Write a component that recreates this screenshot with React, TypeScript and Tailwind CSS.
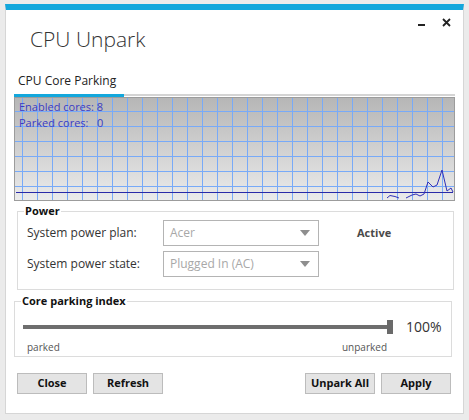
import { Fragment } from 'react'

const font = { fontFamily: '"Open Sans", "Noto Sans", "Liberation Sans", sans-serif' }

// chart grid, 15px cells
const vLines = Array.from({ length: 29 }, (_, i) => 7.5 + i * 15)
const hLines = [13.5, 28.5, 43.5, 58.5, 73.5, 88.5]

const Chart = () => (
  <div className="relative mx-[8px] h-[104px] w-[441px] border border-[#9c9c9c]">
    <svg width="439" height="102" className="block">
      <defs>
        <linearGradient id="bg" x1="0" y1="0" x2="0" y2="1">
          <stop offset="0" stopColor="#b6b6b6" />
          <stop offset="1" stopColor="#ebebeb" />
        </linearGradient>
      </defs>
      <rect width="439" height="102" fill="url(#bg)" />
      {vLines.map((x) => (
        <line key={'v' + x} x1={x} y1="0" x2={x} y2="102" stroke="#78aaf8" strokeWidth="1" />
      ))}
      {hLines.map((y) => (
        <line key={'h' + y} x1="0" y1={y} x2="439" y2={y} stroke="#78aaf8" strokeWidth="1" />
      ))}
      <line x1="1" y1="94.5" x2="438" y2="94.5" stroke="#2a2aa8" strokeWidth="1.2" />
      <polyline points="372,100 375,97.5 380,98.5 384,100" fill="none" stroke="#3030b8" strokeWidth="1" />
      <polyline
        points="391,100 397,97 401,96 405,98 409,96 413,84 418,89 422,87 427,72 432,93 436,90 438,94"
        fill="none"
        stroke="#3030b8"
        strokeWidth="1"
      />
    </svg>
    <div className="absolute left-[4px] top-[1px] text-[11px] leading-[16px] text-[#3b3bc4]" style={font}>
      <p>Enabled cores: 8</p>
      <p>Parked cores:&nbsp;&nbsp; 0</p>
    </div>
  </div>
)

const Select = ({ value }: { value: string }) => (
  <div className="flex h-[26px] w-[156px] items-center justify-between border border-[#b4b4b4] bg-white pl-[6px] pr-[8px]">
    <span className="text-[12px] text-[#a8a8a8]">{value}</span>
    <svg width="10" height="6" viewBox="0 0 10 6">
      <path d="M0 0h10L5 6z" fill="#8e8e8e" />
    </svg>
  </div>
)

const Button = ({ label }: { label: string }) => (
  <button className="h-[21px] w-[70px] border border-[#bcbcbc] bg-[#e4e4e4] text-[11px] font-bold text-[#111]">
    {label}
  </button>
)

export default function App() {
  return (
    <div className="h-[420px] w-[469px] bg-[#ebebeb] pl-[5px] pt-[4px]" style={font}>
      <div className="h-[410px] w-[459px] border border-t-[6px] border-[#d6d6d6] border-t-[#13a7dc] bg-white">
        {/* header */}
        <div className="flex items-start justify-between">
          <h1 className="pl-[24px] pt-[14px] text-[21px] font-light leading-[30px] text-[#333]">CPU Unpark</h1>
          <div className="flex items-center gap-[17px] pr-[12px] pt-[7px]">
            <svg width="7" height="10" viewBox="0 0 7 10">
              <rect x="0" y="7" width="7" height="2" fill="#222" />
            </svg>
            <svg width="9" height="9" viewBox="0 0 9 9">
              <path d="M1 1l7 7M8 1L1 8" stroke="#222" strokeWidth="1.8" />
            </svg>
          </div>
        </div>

        {/* tabs */}
        <div className="mx-[8px] mt-[18px] flex items-end">
          <div className="w-[110px] whitespace-nowrap border-b-[3px] border-[#13a7dc] pb-[4px] pl-[4px] text-[12px] leading-[18px] text-[#222]">
            CPU Core Parking
          </div>
          <div className="mb-[1px] flex-1 border-b-2 border-[#d4d4d4]" />
        </div>

        <Chart />

        {/* power */}
        <fieldset className="ml-[11px] mt-[3px] w-[437px] border border-[#dcdcdc] px-[6px] pb-[12px]">
          <legend className="px-[1px] text-[11px] font-bold leading-[14px] text-[#111]">Power</legend>
          <div className="mt-[2px] flex flex-col gap-[5px]">
            {[
              ['System power plan:', 'Acer'],
              ['System power state:', 'Plugged In (AC)'],
            ].map(([label, value], i) => (
              <div key={label} className="flex items-center">
                <span className="ml-[3px] w-[136px] text-[12px] text-[#333]">{label}</span>
                <Select value={value} />
                {i === 0 && (
                  <Fragment>
                    <span className="ml-[38px] text-[11px] font-bold text-[#4a4a4a]">Active</span>
                  </Fragment>
                )}
              </div>
            ))}
          </div>
        </fieldset>

        {/* core parking index */}
        <fieldset className="ml-[8px] mt-[4px] w-[438px] border border-[#dcdcdc] px-[6px] pb-[2px]">
          <legend className="px-[1px] text-[11px] font-bold leading-[14px] text-[#111]">Core parking index</legend>
          <div className="ml-[2px] mt-[11px] flex items-center">
            <div className="h-[4px] w-[364px] bg-[#6e6e6e]" />
            <div className="h-[14px] w-[6px] bg-[#6a6a6a]" />
            <span className="ml-[13px] text-[14px] leading-[16px] text-[#333]">100%</span>
          </div>
          <div className="ml-[6px] mt-[5px] flex w-[360px] justify-between text-[10px] leading-[14px] text-[#555]">
            <span>parked</span>
            <span>unparked</span>
          </div>
        </fieldset>

        {/* buttons */}
        <div className="ml-[11px] mt-[16px] flex w-[434px] justify-between">
          <div className="flex gap-[6px]">
            <Button label="Close" />
            <Button label="Refresh" />
          </div>
          <div className="flex gap-[6px]">
            <Button label="Unpark All" />
            <Button label="Apply" />
          </div>
        </div>
      </div>
    </div>
  )
}
